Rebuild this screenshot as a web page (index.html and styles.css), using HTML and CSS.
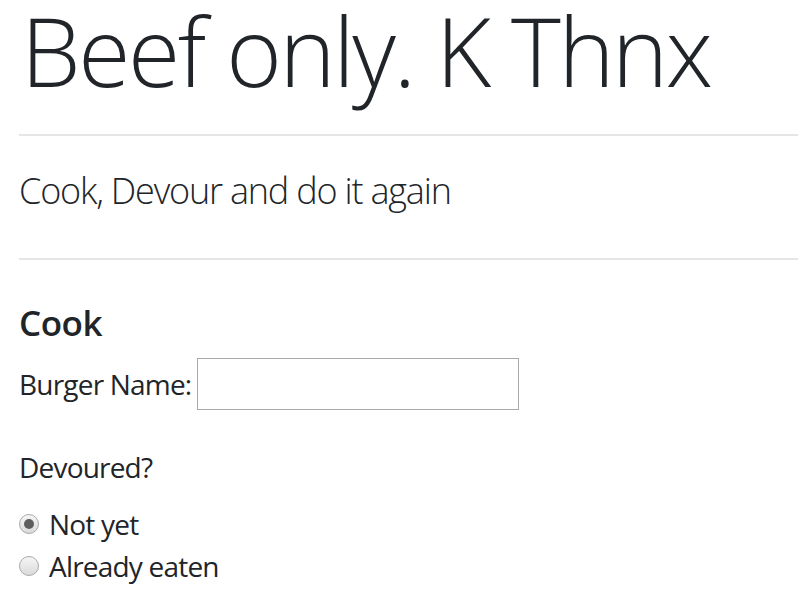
FILE: index.html
```html
<!DOCTYPE html>
<html>
<head>
<meta charset="utf-8">
<link rel="stylesheet" href="styles.css">
</head>
<body>
<div class="page">
  <h1 class="title">Beef only. K Thnx</h1>
  <hr class="rule rule-top">
  <p class="lead">Cook, Devour and do it again</p>
  <hr class="rule rule-bottom">
  <h2 class="section">Cook</h2>
  <form class="form">
    <div class="name-row">
      <label class="label" for="burger">Burger Name:</label>
      <input class="text-input" id="burger" type="text">
    </div>
    <p class="question">Devoured?</p>
    <label class="choice"><input class="radio" type="radio" name="dev" checked> Not yet</label>
    <label class="choice"><input class="radio" type="radio" name="dev"> Already eaten</label>
  </form>
</div>
</body>
</html>
```
FILE: styles.css
```css
html, body {
  margin: 0;
  padding: 0;
  background: #fff;
}
body {
  font-family: "Open Sans", "Noto Sans", sans-serif;
  color: #212529;
  font-size: 28px;
  line-height: 1.5;
  letter-spacing: -0.8px;
}
.page {
  padding-left: 19px;
}
.title {
  font-size: 95px;
  font-weight: 300;
  line-height: 100px;
  letter-spacing: -2.4px;
  margin: 0 0 0 2px;
}
.rule {
  border: 0;
  border-top: 2px solid #e6e6e6;
  margin: 0;
}
.rule-top {
  margin-top: 34px;
}
.lead {
  font-size: 36px;
  font-weight: 300;
  letter-spacing: -1.2px;
  margin: 28px 0 40px;
}
.section {
  font-size: 35px;
  font-weight: 600;
  line-height: 1.2;
  letter-spacing: -0.5px;
  margin: 42px 0 14px;
}
.form {
  display: flex;
  flex-direction: column;
}
.name-row {
  display: flex;
  align-items: center;
  gap: 6px;
}
.text-input {
  width: 322px;
  height: 52px;
  box-sizing: border-box;
  border: 1px solid #a9a9a9;
  margin: 0;
  padding: 0 4px;
  font: inherit;
}
.question {
  margin: 36px 0 15px;
}
.choice {
  display: flex;
  align-items: center;
  gap: 10px;
}
.radio {
  appearance: none;
  -webkit-appearance: none;
  width: 20px;
  height: 20px;
  margin: 0;
  border-radius: 50%;
  border: 1px solid #aaaaaa;
  background: linear-gradient(#f6f6f6, #dadada);
  box-sizing: border-box;
  position: relative;
}
.radio:checked::after {
  content: "";
  position: absolute;
  left: 4px;
  top: 4px;
  width: 10px;
  height: 10px;
  border-radius: 50%;
  background: #5e5e5e;
}
```
